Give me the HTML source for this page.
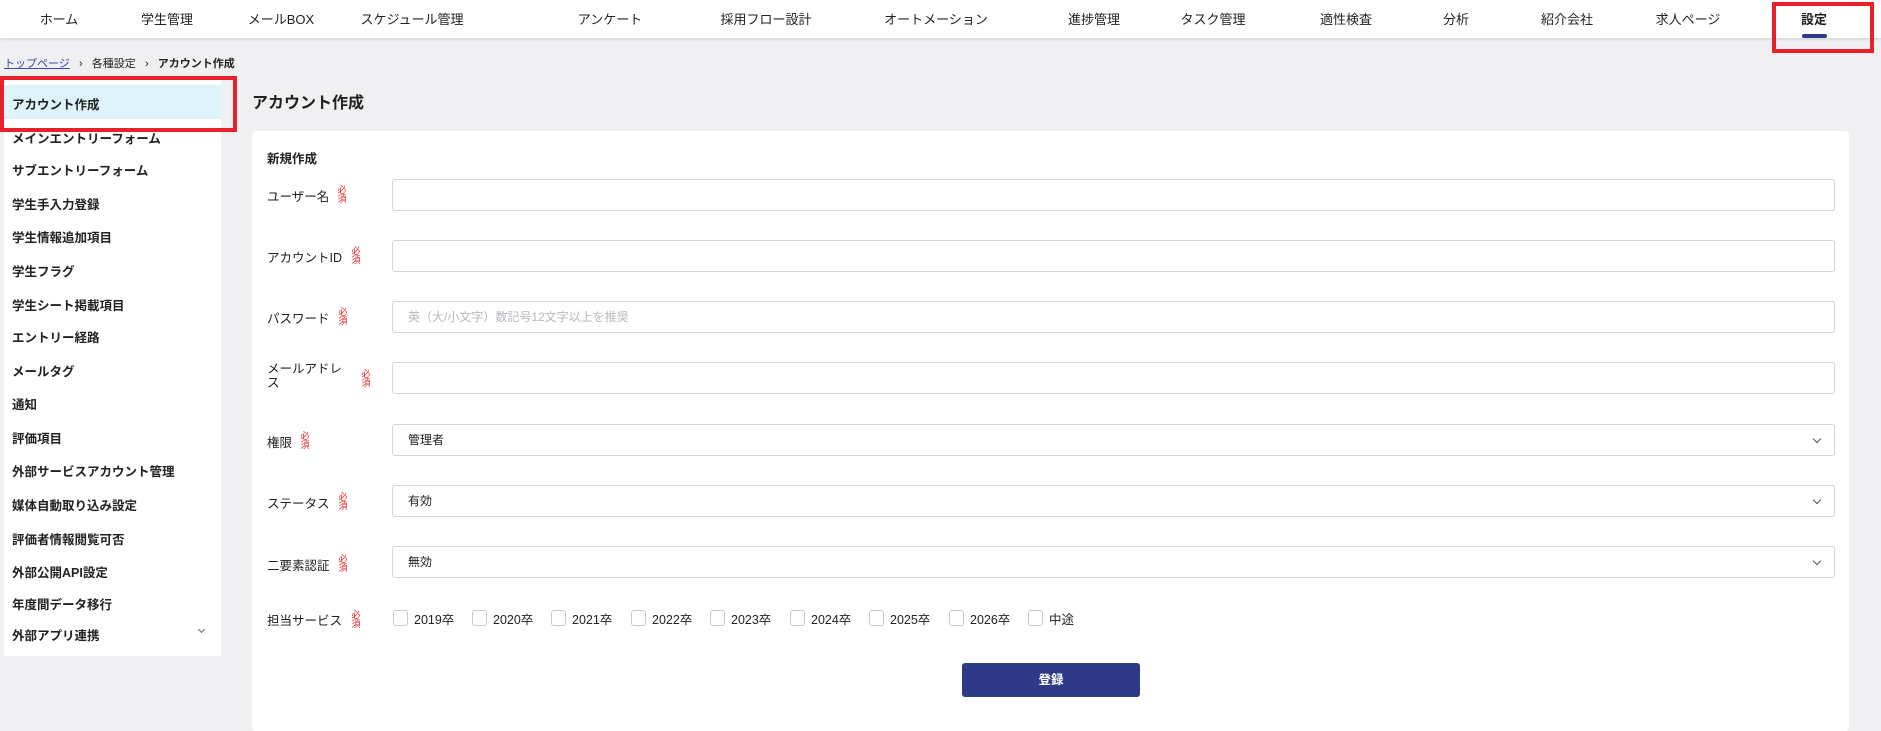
<!DOCTYPE html>
<html><head><meta charset="utf-8"><style>
*{margin:0;padding:0;box-sizing:border-box}
body{width:1881px;height:717px;overflow:hidden;background:#f0f0f2;font-family:"Liberation Sans","Noto Sans CJK JP",sans-serif;color:#222;position:relative}
.a{position:absolute;white-space:nowrap}
.nav{position:absolute;left:0;top:0;width:1881px;height:38px;background:#fff;box-shadow:0 1px 3px rgba(0,0,0,.15)}
.nav span{position:absolute;top:9px;font-size:13px;transform:translateX(-50%);color:#222}
.side{position:absolute;left:4px;top:80px;width:217px;height:576px;background:#fff}
.side div{position:absolute;left:8px;font-size:12.5px;font-weight:bold;color:#222}
.card{position:absolute;left:252px;top:131px;width:1597px;height:600px;background:#fff;border-radius:4px}
.lbl{position:absolute;font-size:12.5px;color:#222;left:267px}
.req{position:absolute;font-size:9px;line-height:9px;color:#e02020;width:10px;text-align:center;writing-mode:horizontal-tb}
.in{position:absolute;left:392px;width:1443px;height:32px;border:1px solid #d4d4da;border-radius:3px;background:#fff;font-size:12px;padding-left:15px;line-height:30px}
.chev{position:absolute;right:14px;top:11px;width:6px;height:6px;border-right:1.5px solid #555;border-bottom:1.5px solid #555;transform:rotate(45deg)}
.cb{position:absolute;top:610px;width:15px;height:16px;border:1px solid #c8c8ce;border-radius:3px;background:#fff}
.cbt{position:absolute;top:609px;font-size:12.5px}
</style></head><body>
<div class="nav">
<span style="left:59px">ホーム</span><span style="left:167px">学生管理</span><span style="left:281px">メールBOX</span><span style="left:412px">スケジュール管理</span><span style="left:610px">アンケート</span><span style="left:766px">採用フロー設計</span><span style="left:936px">オートメーション</span><span style="left:1094px">進捗管理</span><span style="left:1213px">タスク管理</span><span style="left:1346px">適性検査</span><span style="left:1456px">分析</span><span style="left:1567px">紹介会社</span><span style="left:1688px">求人ページ</span><span style="left:1814px;font-weight:bold">設定</span>
<div class="a" style="left:1802px;top:34px;width:25px;height:4px;background:#2e3a87;border-radius:2px"></div>
</div>
<div class="a" style="left:1772px;top:2px;width:102px;height:51px;border:4px solid #e8202a"></div>
<div class="a" style="left:4px;top:55px;font-size:11px"><span style="color:#3a4ab0;text-decoration:underline">トップページ</span>&nbsp;&nbsp;&nbsp;›&nbsp;&nbsp;&nbsp;各種設定&nbsp;&nbsp;&nbsp;›&nbsp;&nbsp;&nbsp;<b>アカウント作成</b></div>
<div class="side">
<div style="left:0;top:5px;width:217px;height:34px;background:#dff3fa"></div>
<div style="top:14px">アカウント作成</div>
<div style="top:48px">メインエントリーフォーム</div>
<div style="top:80px">サブエントリーフォーム</div>
<div style="top:114px">学生手入力登録</div>
<div style="top:147px">学生情報追加項目</div>
<div style="top:181px">学生フラグ</div>
<div style="top:215px">学生シート掲載項目</div>
<div style="top:247px">エントリー経路</div>
<div style="top:281px">メールタグ</div>
<div style="top:314px">通知</div>
<div style="top:348px">評価項目</div>
<div style="top:381px">外部サービスアカウント管理</div>
<div style="top:415px">媒体自動取り込み設定</div>
<div style="top:449px">評価者情報閲覧可否</div>
<div style="top:482px">外部公開API設定</div>
<div style="top:514px">年度間データ移行</div>
<div style="top:545px">外部アプリ連携</div>
<div style="left:195px;top:547px;width:5px;height:5px;border-right:1.3px solid #666;border-bottom:1.3px solid #666;transform:rotate(45deg)"></div>
</div>
<div class="a" style="left:0;top:76px;width:237px;height:56px;border:4px solid #e8202a"></div>
<div class="a" style="left:252px;top:89px;font-size:16px;font-weight:bold">アカウント作成</div>
<div class="card"></div>
<div class="lbl" style="top:148px;font-weight:bold">新規作成</div>

<div class="lbl" style="top:186px">ユーザー名</div><div class="req" style="left:337px;top:186px">必<br>須</div>
<div class="in" style="top:179px"></div>
<div class="lbl" style="top:247px">アカウントID</div><div class="req" style="left:351px;top:247px">必<br>須</div>
<div class="in" style="top:240px"></div>
<div class="lbl" style="top:308px">パスワード</div><div class="req" style="left:338px;top:308px">必<br>須</div>
<div class="in" style="top:301px;color:#b8b8be">英（大/小文字）数記号12文字以上を推奨</div>
<div class="lbl" style="top:362px;line-height:14px">メールアドレ<br>ス</div><div class="req" style="left:361px;top:370px">必<br>須</div>
<div class="in" style="top:362px"></div>
<div class="lbl" style="top:432px">権限</div><div class="req" style="left:300px;top:432px">必<br>須</div>
<div class="in" style="top:424px">管理者<div class="chev"></div></div>
<div class="lbl" style="top:493px">ステータス</div><div class="req" style="left:338px;top:493px">必<br>須</div>
<div class="in" style="top:485px">有効<div class="chev"></div></div>
<div class="lbl" style="top:555px">二要素認証</div><div class="req" style="left:338px;top:555px">必<br>須</div>
<div class="in" style="top:546px">無効<div class="chev"></div></div>
<div class="lbl" style="top:610px">担当サービス</div><div class="req" style="left:351px;top:611px">必<br>須</div>

<div class="cb" style="left:393px"></div><div class="cbt" style="left:414px">2019卒</div>
<div class="cb" style="left:472px"></div><div class="cbt" style="left:493px">2020卒</div>
<div class="cb" style="left:551px"></div><div class="cbt" style="left:572px">2021卒</div>
<div class="cb" style="left:631px"></div><div class="cbt" style="left:652px">2022卒</div>
<div class="cb" style="left:710px"></div><div class="cbt" style="left:731px">2023卒</div>
<div class="cb" style="left:790px"></div><div class="cbt" style="left:811px">2024卒</div>
<div class="cb" style="left:869px"></div><div class="cbt" style="left:890px">2025卒</div>
<div class="cb" style="left:949px"></div><div class="cbt" style="left:970px">2026卒</div>
<div class="cb" style="left:1028px"></div><div class="cbt" style="left:1049px">中途</div>

<div class="a" style="left:962px;top:663px;width:178px;height:34px;background:#2e3a87;border-radius:3px;color:#fff;font-size:12.5px;font-weight:bold;text-align:center;line-height:34px">登録</div>
</body></html>
